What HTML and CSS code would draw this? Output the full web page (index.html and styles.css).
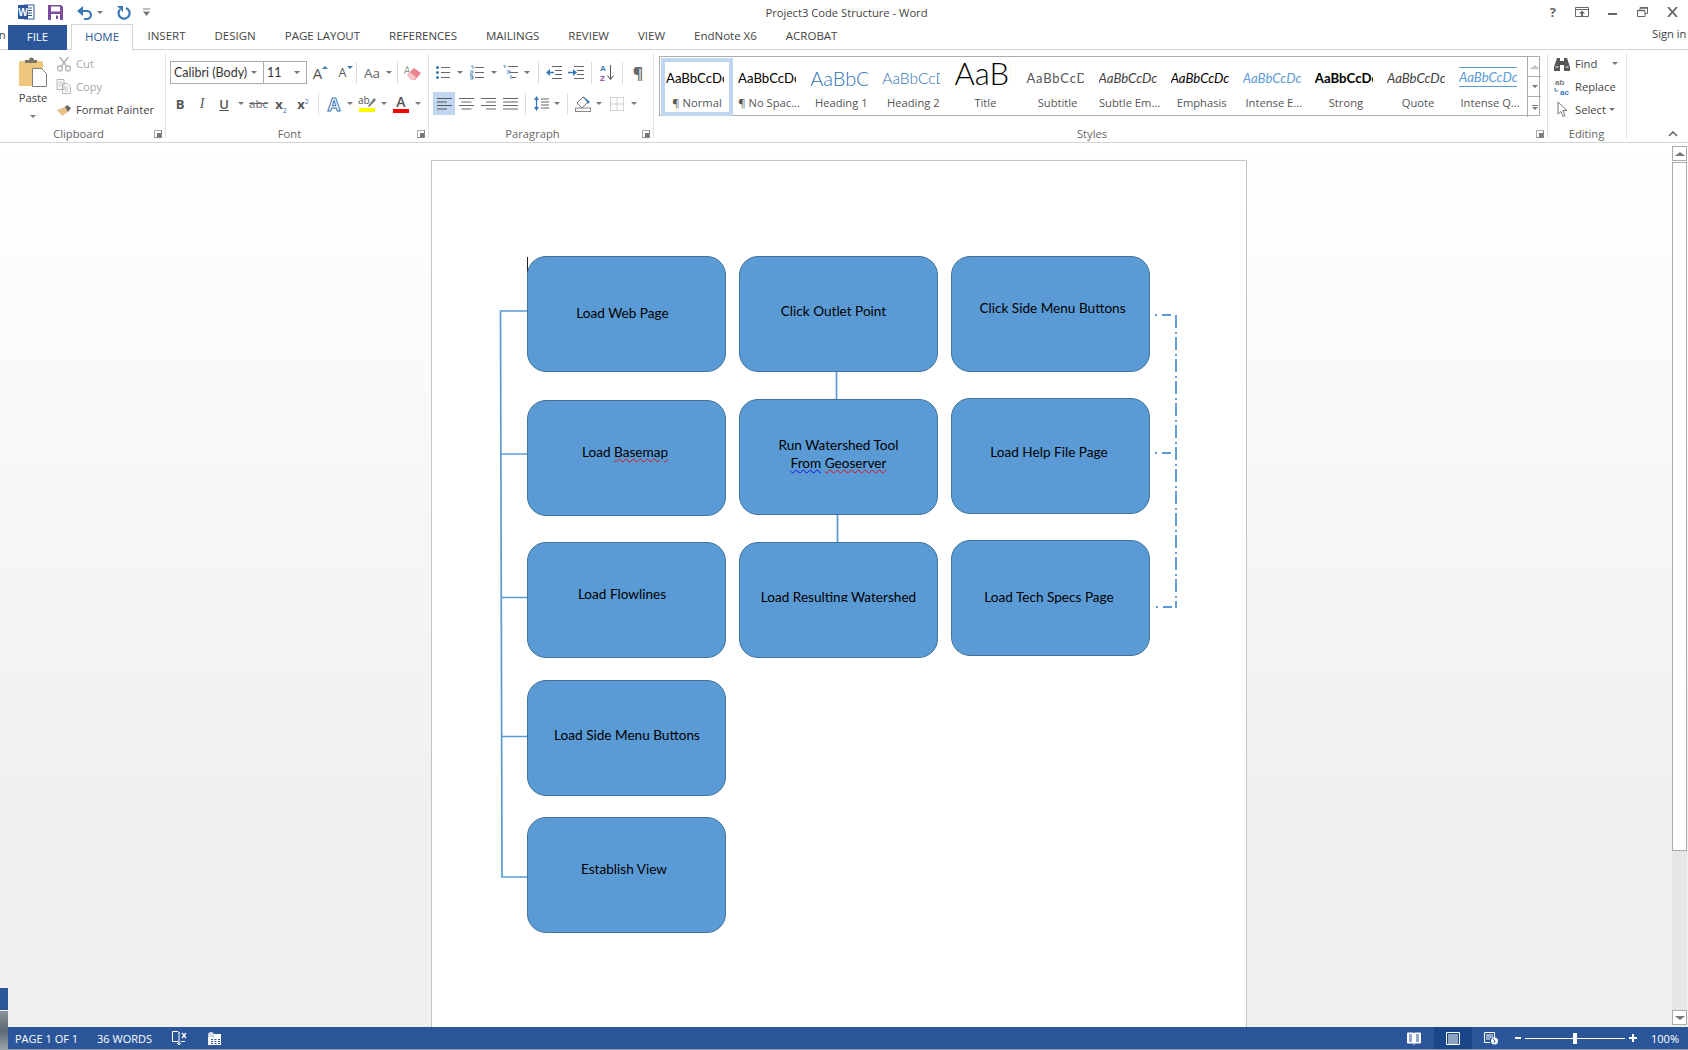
FILE: index.html

```html
<!DOCTYPE html>
<html lang="en">
<head>
  <meta charset="UTF-8">
  <title>Project3 Code Structure - Word</title>
  <link rel="stylesheet" href="styles.css">
</head>
<body>
  <!-- title bar -->
  <div class="titlebar">
    <div class="qat">
      <svg class="ic-word" width="17" height="16" viewBox="0 0 17 16"><rect x="6" y="1" width="10" height="14" fill="#fff" stroke="#2b579a"/><path d="M9 4h5M9 6.500h5M9 9h5M9 11.500h5" stroke="#2b579a"/><rect y="1" width="10" height="14" fill="#2b579a"/><text x="5" y="12" class="svg-w">W</text></svg>
      <svg class="ic-save" width="15" height="15" viewBox="0 0 15 15"><path d="M0 0h13l2 2v13H0z" fill="#7b4b9e"/><rect x="3" y="1.500" width="9" height="5" fill="#fff"/><rect x="3" y="9" width="9" height="6" fill="#fff"/><rect x="8" y="10.500" width="2" height="3.500" fill="#7b4b9e"/></svg>
      <svg class="ic-undo" width="16" height="15" viewBox="0 0 16 15"><path d="M3 6h7a4 4 0 0 1 0 8H7" fill="none" stroke="#3a77b6" stroke-width="2.200"/><path d="M6 1v10L0 6z" fill="#3a77b6"/></svg>
      <span class="caret qat-caret"></span>
      <svg class="ic-redo" width="14" height="15" viewBox="0 0 14 15"><path d="M9 3a5.500 5.500 0 1 1-6 1.500" fill="none" stroke="#3a77b6" stroke-width="2.200"/><path d="M0 1h6v6z" fill="#3a77b6"/></svg>
      <svg class="ic-custom" width="7" height="8" viewBox="0 0 7 8"><path d="M0 1h7" stroke="#777"/><path d="M0 3.500h7L3.500 8z" fill="#777"/></svg>
    </div>
    <div class="doc-title">Project3 Code Structure - Word</div>
    <div class="win-btns">
      <span class="help-q">?</span>
      <svg width="14" height="10" viewBox="0 0 14 10"><path d="M.5.500h13v9H.5zM.5 2.500h13" fill="none" stroke="#666"/><path d="M7 3.500 10 6.500H8V9H6V6.500H4z" fill="#666"/></svg>
      <svg width="10" height="10" viewBox="0 0 10 10"><rect y="6" width="9" height="2" fill="#666"/></svg>
      <svg width="11" height="10" viewBox="0 0 11 10"><path d="M3 2.500V.500h7.500v6H8" fill="none" stroke="#666"/><path d="M.5 3.500h7.500v6H.5z" fill="none" stroke="#666"/><path d="M.5 3.500h7.500M3 1h7.500" stroke="#666" stroke-width="1.500"/></svg>
      <svg width="11" height="10" viewBox="0 0 11 10"><path d="M1 0l9 10M10 0 1 10" stroke="#666" stroke-width="1.800"/></svg>
    </div>
  </div>

  <!-- tabs -->
  <div class="tabs">
    <span class="cut-left">in</span>
    <div class="tab tab-file">FILE</div>
    <div class="tab tab-home">HOME</div>
    <div class="tab">INSERT</div>
    <div class="tab">DESIGN</div>
    <div class="tab">PAGE LAYOUT</div>
    <div class="tab">REFERENCES</div>
    <div class="tab">MAILINGS</div>
    <div class="tab">REVIEW</div>
    <div class="tab">VIEW</div>
    <div class="tab tab-mixed">EndNote X6</div>
    <div class="tab">ACROBAT</div>
    <div class="sign-in">Sign in</div>
  </div>

  <!-- ribbon -->
  <div class="ribbon">
    <div class="group g-clip">
      <div class="clip-body">
        <div class="paste">
          <svg width="30" height="31" viewBox="0 0 30 31"><rect x="1" y="4" width="24" height="25" rx="1.500" fill="#eec67e"/><path d="M7 6V3h4a2.500 2.500 0 0 1 5 0h3v3z" fill="#7d7468"/><path d="M14.500 11.500h9l5 5v13h-14z" fill="#fff" stroke="#7d7d7d"/></svg>
          <span class="paste-label">Paste</span>
          <span class="caret"></span>
        </div>
        <div class="small-col">
          <div class="small-row muted">
            <svg width="15" height="16" viewBox="0 0 15 16"><path d="M3 1l7 9M12 1 5 10" stroke="#b5b5b5" stroke-width="1.500"/><circle cx="3.500" cy="12.500" r="2.500" fill="none" stroke="#b5b5b5" stroke-width="1.300"/><circle cx="11.500" cy="12.500" r="2.500" fill="none" stroke="#b5b5b5" stroke-width="1.300"/></svg>
            <span>Cut</span>
          </div>
          <div class="small-row muted">
            <svg width="15" height="15" viewBox="0 0 15 15"><path d="M.5.500h7v10h-7zM6 4.500h5l3 3v7H6z" fill="#fff" stroke="#b5b5b5"/><path d="M2 3h4M2 5h3M2 7h3M8 8h4M8 10h4M8 12h4" stroke="#c4c4c4"/></svg>
            <span>Copy</span>
          </div>
          <div class="small-row">
            <svg width="16" height="15" viewBox="0 0 16 15"><path d="M8 6l3-3 4 3-3 4z" fill="#666"/><path d="M9 5 1 8l5 6 6-4z" fill="#e8c187"/></svg>
            <span>Format Painter</span>
          </div>
        </div>
      </div>
      <div class="group-label">Clipboard</div>
      <span class="launcher"></span>
    </div>

    <div class="group g-font">
      <div class="rows">
        <div class="row row-font1">
          <div class="fbox fbox-name"><span>Calibri (Body)</span><span class="caret"></span></div>
          <div class="fbox fbox-size"><span>11</span><span class="caret"></span></div>
          <div class="b b-grow"><span class="big-a">A</span><span class="up-tri"></span></div>
          <div class="b b-shrink"><span class="small-a">A</span><span class="down-tri"></span></div>
          <span class="sep s-font1"></span>
          <div class="b b-case"><span class="aa">Aa</span></div>
          <span class="caret c12"></span>
          <span class="sep s-font2"></span>
          <div class="b b-clear">
            <svg width="20" height="18" viewBox="0 0 20 18"><text x="1" y="10" class="svg-clear">A</text><path d="M4 11l7-7 7 5-6 7H8z" fill="#e9828c"/><path d="M4 11l3-3 6 5-2 3H8z" fill="#f6c3c8"/></svg>
          </div>
        </div>
        <div class="row row-font2">
          <div class="b fmt fmt-b">B</div>
          <div class="b fmt fmt-i">I</div>
          <div class="b fmt fmt-u">U</div>
          <span class="caret c12"></span>
          <div class="b b23 fmt-abc">abc</div>
          <div class="b fmt-sub"><span>x<sub>2</sub></span></div>
          <div class="b fmt-sup"><span>x<sup>2</sup></span></div>
          <span class="sep s-font3"></span>
          <div class="b">
            <svg width="18" height="18" viewBox="0 0 18 18"><text x="9" y="16" text-anchor="middle" class="svg-effect">A</text></svg>
          </div>
          <span class="caret c10"></span>
          <div class="b b24 stack">
            <svg width="18" height="13" viewBox="0 0 18 13"><text x="0" y="9" class="svg-ab">ab</text><path d="M10 11l6-8 2 2-7 7z" fill="#777"/></svg>
            <span class="swatch sw-yellow"></span>
          </div>
          <span class="caret c10"></span>
          <div class="b b24 stack">
            <span class="color-a">A</span>
            <span class="swatch sw-red"></span>
          </div>
          <span class="caret c10"></span>
        </div>
      </div>
      <div class="group-label">Font</div>
      <span class="launcher"></span>
    </div>

    <div class="group g-para">
      <div class="rows">
        <div class="row row-para1">
          <div class="b">
            <svg width="14" height="15" viewBox="0 0 14 15"><path d="M5 2.500h9M5 7.500h9M5 12.500h9" stroke="#666"/><circle cx="1.500" cy="2.500" r="1.500" fill="#3a77b6"/><circle cx="1.500" cy="7.500" r="1.500" fill="#3a77b6"/><circle cx="1.500" cy="12.500" r="1.500" fill="#3a77b6"/></svg>
          </div>
          <span class="caret c12"></span>
          <div class="b">
            <svg width="14" height="15" viewBox="0 0 14 15"><path d="M5 2.500h9M5 7.500h9M5 12.500h9" stroke="#666"/><path d="M1 1h2v3M0 6h3v2H0v2h3M0 11h3v3H0M1 12.500h2" fill="none" stroke="#3a77b6" stroke-width=".8"/></svg>
          </div>
          <span class="caret c12"></span>
          <div class="b">
            <svg width="16" height="15" viewBox="0 0 16 15"><path d="M5 1.500h10M7 7.500h8M9 12.500h4" stroke="#666"/><path d="M0 0h2v3M4 6h3v2H4M8 10v4" fill="none" stroke="#3a77b6" stroke-width=".9"/></svg>
          </div>
          <span class="caret c10"></span>
          <span class="sep s-p1"></span>
          <div class="b">
            <svg width="16" height="13" viewBox="0 0 16 13"><path d="M6 .500h10M6 12.500h10M9 4.500h7M9 8.500h7" stroke="#666"/><path d="M8 6.500H2" stroke="#3a77b6" stroke-width="1.500"/><path d="M4 3v7L0 6.500z" fill="#3a77b6"/></svg>
          </div>
          <div class="b">
            <svg width="16" height="13" viewBox="0 0 16 13"><path d="M6 .500h10M6 12.500h10M9 4.500h7M9 8.500h7" stroke="#666"/><path d="M0 6.500h6" stroke="#3a77b6" stroke-width="1.500"/><path d="M5 3v7l4-3.500z" fill="#3a77b6"/></svg>
          </div>
          <span class="sep s-p2"></span>
          <div class="b">
            <svg width="14" height="19" viewBox="0 0 14 19"><text x="0" y="8" class="svg-az az-a">A</text><text x="0" y="17.500" class="svg-az az-z">Z</text><path d="M10.500 2v14" stroke="#555"/><path d="M7.500 12.500l3 4 3-4" fill="none" stroke="#555"/></svg>
          </div>
          <span class="sep s-p3"></span>
          <div class="b pilcrow">¶</div>
        </div>
        <div class="row row-para2">
          <div class="b b-on">
            <svg width="15" height="12" viewBox="0 0 15 12"><path d="M0 .500h15M0 4h10M0 7.500h15M0 11h10" stroke="#555"/></svg>
          </div>
          <div class="b">
            <svg width="15" height="12" viewBox="0 0 15 12"><path d="M0 .500h15M2.500 4h10M0 7.500h15M2.500 11h10" stroke="#666"/></svg>
          </div>
          <div class="b">
            <svg width="15" height="12" viewBox="0 0 15 12"><path d="M0 .500h15M5 4h10M0 7.500h15M5 11h10" stroke="#666"/></svg>
          </div>
          <div class="b">
            <svg width="15" height="12" viewBox="0 0 15 12"><path d="M0 .500h15M0 4h15M0 7.500h15M0 11h15" stroke="#666"/></svg>
          </div>
          <span class="sep s-p4"></span>
          <div class="b">
            <svg width="15" height="15" viewBox="0 0 15 15"><path d="M7 3h8M7 6h8M7 9h8M7 12h8" stroke="#666"/><path d="M2.500 2v11" stroke="#3a77b6" stroke-width="1.300"/><path d="M0 4l2.500-4L5 4zM0 11l2.500 4L5 11z" fill="#3a77b6"/></svg>
          </div>
          <span class="caret c10"></span>
          <span class="sep s-p5"></span>
          <div class="b">
            <svg width="17" height="17" viewBox="0 0 17 17"><path d="M2 8 8 2l5 5-6 6z" fill="#fff" stroke="#777"/><path d="M8 1l7 6-2 2z" fill="#3a77b6"/><rect x=".5" y="13" width="15" height="3.500" fill="#fff" stroke="#888"/></svg>
          </div>
          <span class="caret c10"></span>
          <div class="b b-borders">
            <svg width="14" height="14" viewBox="0 0 14 14"><path d="M.5.500h13v13H.5zM7 .5v13M.5 7h13" fill="none" stroke="#aaa" stroke-dasharray="1 1"/></svg>
          </div>
          <span class="caret c12"></span>
        </div>
      </div>
      <div class="group-label">Paragraph</div>
      <span class="launcher"></span>
    </div>

    <div class="group g-styles">
      <div class="gallery">
        <div class="style-item style-on"><div class="sample">AaBbCcDc</div><div class="style-name">¶ Normal</div></div>
        <div class="style-item"><div class="sample">AaBbCcDc</div><div class="style-name">¶ No Spac...</div></div>
        <div class="style-item"><div class="sample s-h1">AaBbCc</div><div class="style-name">Heading 1</div></div>
        <div class="style-item"><div class="sample s-h2">AaBbCcD</div><div class="style-name">Heading 2</div></div>
        <div class="style-item"><div class="sample s-title">AaBb</div><div class="style-name">Title</div></div>
        <div class="style-item"><div class="sample s-subtitle">AaBbCcD</div><div class="style-name">Subtitle</div></div>
        <div class="style-item"><div class="sample s-subtle">AaBbCcDc</div><div class="style-name">Subtle Em...</div></div>
        <div class="style-item"><div class="sample s-emph">AaBbCcDc</div><div class="style-name">Emphasis</div></div>
        <div class="style-item"><div class="sample s-intense">AaBbCcDc</div><div class="style-name">Intense E...</div></div>
        <div class="style-item"><div class="sample s-strong">AaBbCcDc</div><div class="style-name">Strong</div></div>
        <div class="style-item"><div class="sample s-subtle">AaBbCcDc</div><div class="style-name">Quote</div></div>
        <div class="style-item"><div class="sample s-intense s-iq">AaBbCcDc</div><div class="style-name">Intense Q...</div></div>
        <div class="gallery-scroll">
          <div class="gs-btn"><span class="tri-up off"></span></div>
          <div class="gs-btn"><span class="caret"></span></div>
          <div class="gs-btn gs-more"><span class="bar"></span><span class="caret"></span></div>
        </div>
      </div>
      <div class="group-label">Styles</div>
      <span class="launcher"></span>
    </div>

    <div class="group g-edit">
      <div class="small-col edit-col">
        <div class="small-row">
          <svg width="16" height="14" viewBox="0 0 16 14"><path d="M3 1h3v3h4V1h3l3 9v4h-6V8H6v6H0v-4z" fill="#555"/><path d="M1.500 10h3M11.500 10h3" stroke="#fff"/></svg>
          <span>Find</span><span class="caret find-caret"></span>
        </div>
        <div class="small-row">
          <svg width="16" height="18" viewBox="0 0 16 18"><text x="1" y="7" class="svg-rep rep-ab">ab</text><text x="6" y="16.500" class="svg-rep rep-ac">ac</text><path d="M1 10v3h3" fill="none" stroke="#3a77b6"/></svg>
          <span>Replace</span>
        </div>
        <div class="small-row">
          <svg width="16" height="17" viewBox="0 0 16 17"><path d="M4 1v12l3-2.500 2 5 2-1-2-5h4z" fill="#fff" stroke="#777"/></svg>
          <span>Select</span><span class="caret sel-caret"></span>
        </div>
      </div>
      <div class="group-label">Editing</div>
    </div>
    <svg class="collapse" width="10" height="6" viewBox="0 0 10 6"><path d="M1 5l4-4 4 4" fill="none" stroke="#666" stroke-width="1.600"/></svg>
  </div>

  <!-- document -->
  <div class="workspace">
    <div class="page">
      <svg class="links" width="814" height="800" viewBox="432 161 814 800">
        <path class="link" d="M527 311H500.500L502 877H527M501 454H527M501.500 597.500H527M502 736.500H527M836.500 372V399M837.500 515V542"/>
        <path class="link link-dash" d="M1176 315V608"/>
        <path class="link link-tick" d="M1155 315H1176M1155 453H1176M1156 607H1176"/>
      </svg>
      <span class="cursor"></span>
      <div class="node n-web">Load Web Page</div>
      <div class="node n-outlet">Click Outlet Point</div>
      <div class="node n-side">Click Side Menu Buttons</div>
      <div class="node n-base">Load <span class="typo">Basemap</span></div>
      <div class="node n-run">Run Watershed Tool<br><span class="gram">From</span> <span class="typo">Geoserver</span></div>
      <div class="node n-help">Load Help File Page</div>
      <div class="node n-flow">Load Flowlines</div>
      <div class="node n-result"><span class="cut-line">Load Resulting Watershed</span></div>
      <div class="node n-tech">Load Tech Specs Page</div>
      <div class="node n-menu">Load Side Menu Buttons</div>
      <div class="node n-view">Establish View</div>
    </div>
    <div class="vscroll">
      <div class="vs-btn"><span class="tri-up"></span></div>
      <div class="vs-thumb"></div>
      <div class="vs-track"></div>
      <div class="vs-btn"><span class="tri-down"></span></div>
    </div>
    <div class="edge-blue"></div>
  </div>

  <!-- status bar -->
  <div class="statusbar">
    <span class="st-text st-page">PAGE 1 OF 1</span>
    <span class="st-text st-words">36 WORDS</span>
    <svg class="st-book" width="15" height="14" viewBox="0 0 15 14"><path d="M7 1.500 6 .5H.5v10H6l1 1.500V1.500zM7 1.500h1" fill="none" stroke="#fff"/><path d="M10 2l4 5M14 2l-4 5" stroke="#fff" stroke-width="1.300"/><path d="M7 12v2M5 12l2 2 2-2M9 10.500h4" fill="none" stroke="#fff"/></svg>
    <svg class="st-macro" width="13" height="13" viewBox="0 0 13 13"><circle cx="3" cy="3" r="3" fill="#d6dfee"/><path d="M0 6h13V2H6v3H0zM0 6h13v7H0z" fill="#fff"/><path d="M3 7.500h2M6.500 7.500h2M10 7.500h2M3 9.500h2M6.500 9.500h2M10 9.500h2M3 11.500h2M6.500 11.500h2M10 11.500h2" stroke="#2b579a"/></svg>
    <div class="st-right">
      <svg class="st-read" width="14" height="13" viewBox="0 0 14 13"><path d="M.5 1h6v10h-6zM7.500 1h6v10h-6z" fill="#fff" stroke="#fff"/><path d="M2 3h3M2 5h3M2 7h3M2 9h3M9 3h3M9 5h3M9 7h3M9 9h3" stroke="#2b579a"/><path d="M7 11v2" stroke="#fff"/></svg>
      <div class="st-view-on">
        <svg width="14" height="13" viewBox="0 0 14 13"><path d="M.5.500h13v12H.5z" fill="none" stroke="#fff"/><path d="M2 3h10M2 5h10M2 7h10M2 9h10M2 11h10" stroke="#fff"/></svg>
      </div>
      <svg class="st-web" width="14" height="13" viewBox="0 0 14 13"><path d="M.5.500h10V6M.5.500v10H6" fill="none" stroke="#fff"/><path d="M2 3h7M2 5h7M2 7h4" stroke="#fff"/><circle cx="10.500" cy="9" r="3.500" fill="#fff"/><path d="M9 7l2 2-1 2" fill="none" stroke="#2b579a"/></svg>
      <div class="zoomer">
        <span class="z-minus"></span>
        <div class="z-track"><span class="z-thumb"></span></div>
        <span class="z-plus"></span>
      </div>
      <span class="st-text st-zoom">100%</span>
    </div>
  </div>
  <div class="edge-grey"></div>
</body>
</html>
```

FILE: styles.css

```css
* {
  box-sizing: border-box;
}

html, body {
  margin: 0;
  height: 100%;
}

body {
  position: relative;
  display: flex;
  flex-direction: column;
  width: 1688px;
  height: 1050px;
  overflow: hidden;
  background: #fff;
  font-family: "Open Sans", sans-serif;
  font-size: 11.2px;
  color: #444;
}

svg {
  display: block;
  flex: none;
}

.caret {
  display: inline-block;
  flex: none;
  width: 0;
  height: 0;
  border-left: 3px solid transparent;
  border-right: 3px solid transparent;
  border-top: 3px solid #777;
}

.c10, .c12 {
  margin: 0 2px;
}

.c12 {
  margin: 0 3px;
}

/* title bar */
.titlebar {
  flex: none;
  display: grid;
  grid-template-columns: 1fr auto 1fr;
  align-items: center;
  height: 24px;
}

.qat {
  display: flex;
  align-items: center;
  padding-left: 18px;
}

.ic-save {
  margin-left: 13px;
}

.ic-undo {
  margin-left: 14px;
}

.qat-caret {
  margin-left: 4px;
}

.ic-redo {
  margin-left: 14px;
}

.ic-custom {
  margin-left: 12px;
}

.doc-title {
  padding-left: 5px;
  color: #444;
}

.win-btns {
  display: flex;
  align-items: center;
  justify-content: flex-end;
  gap: 19px;
  padding-right: 10px;
}

.help-q {
  font-weight: 700;
  font-size: 13px;
  line-height: 14px;
  color: #666;
}

/* tabs */
.tabs {
  flex: none;
  position: relative;
  display: flex;
  height: 26px;
  padding-left: 8px;
  border-bottom: 1px solid #d4d4d4;
}

.tab {
  padding: 0 14.5px;
  font-size: 11.500px;
  line-height: 23px;
  color: #444;
  white-space: nowrap;
}

.tab-file {
  width: 59px;
  margin-top: 1px;
  margin-right: 4px;
  padding: 0;
  height: 25px;
  text-align: center;
  background: #2b579a;
  color: #fff;
}

.tab-home {
  width: 62px;
  height: 26px;
  margin-top: 0;
  padding: 0;
  text-align: center;
  color: #2b579a;
  background: #fff;
  border: 1px solid #d4d4d4;
  border-bottom: 0;
}

.cut-left {
  position: absolute;
  left: -4px;
  top: 3px;
  line-height: 16px;
}

.sign-in {
  position: absolute;
  left: 1652px;
  top: 2px;
  color: #444;
  white-space: nowrap;
}

/* ribbon */
.ribbon {
  flex: none;
  position: relative;
  display: flex;
  height: 93px;
  border-bottom: 1px solid #d4d4d4;
}

.group {
  position: relative;
  display: flex;
  flex-direction: column;
  height: 92px;
}

.group::after {
  content: "";
  position: absolute;
  right: 0;
  top: 4px;
  bottom: 4px;
  width: 1px;
  background: #e1e1e1;
}

.g-clip {
  width: 166px;
}

.g-font {
  width: 263px;
}

.g-para {
  width: 225px;
}

.g-styles {
  width: 894px;
}

.g-edit {
  width: 79px;
}

.group-label {
  margin-top: auto;
  height: 16px;
  line-height: 16px;
  text-align: center;
  color: #666;
}

.g-clip .group-label {
  padding-right: 9px;
}

.g-font .group-label {
  padding-right: 16px;
}

.g-para .group-label,
.g-styles .group-label {
  padding-right: 18px;
}

.g-edit .group-label {
  padding-right: 2px;
}

.launcher {
  position: absolute;
  right: 4px;
  bottom: 4px;
  width: 8px;
  height: 8px;
  border: 1px solid #888;
  border-top-color: #aaa;
  border-left-color: #aaa;
}

.launcher::after {
  content: "";
  position: absolute;
  right: 0;
  bottom: 0;
  width: 4px;
  height: 4px;
  background: #777;
}

/* clipboard */
.clip-body {
  display: flex;
}

.paste {
  display: flex;
  flex-direction: column;
  align-items: center;
  width: 46px;
  margin-left: 10px;
  padding-top: 7px;
}

.paste-label {
  line-height: 20px;
}

.paste .caret {
  margin-top: 7px;
}

.small-col {
  display: flex;
  flex-direction: column;
  padding-top: 2px;
}

.small-row {
  display: flex;
  align-items: center;
  gap: 4px;
  height: 23px;
  white-space: nowrap;
}

.small-row svg {
  width: 16px;
}

.muted {
  color: #a8a8a8;
}

/* font + paragraph rows */
.rows {
  display: flex;
  flex-direction: column;
  gap: 8px;
  padding-top: 11px;
}

.row {
  display: flex;
  align-items: center;
  height: 23px;
}

.row-font1 {
  padding-left: 4px;
}

.row-font2 {
  padding-left: 3px;
}

.row-para1 {
  padding-left: 3px;
}

.row-para2 {
  padding-left: 4px;
}

.fbox {
  display: flex;
  align-items: center;
  justify-content: space-between;
  height: 23px;
  padding: 0 6px 0 3px;
  border: 1px solid #ababab;
  font-family: "Lato", sans-serif;
  font-size: 12.500px;
  color: #333;
  white-space: nowrap;
}

.fbox-name {
  width: 94px;
}

.fbox-size {
  width: 43px;
  margin-left: 0;
  border-left-width: 0;
}

.b {
  position: relative;
  display: flex;
  flex: none;
  align-items: center;
  justify-content: center;
  width: 22px;
  height: 23px;
}

.b23 {
  width: 23px;
}

.b24 {
  width: 24px;
}

.b-on {
  background: #c1d6f1;
}

.b-grow {
  margin-left: 1px;
}

.b-shrink {
  margin-left: 3px;
}

.big-a {
  margin-right: 3px;
  font-size: 15px;
  color: #555;
}

.small-a {
  margin-right: 3px;
  font-size: 12.500px;
  color: #555;
}

.up-tri, .down-tri {
  position: absolute;
  right: 2px;
  top: 5px;
  width: 0;
  height: 0;
  border-left: 3px solid transparent;
  border-right: 3px solid transparent;
}

.up-tri {
  border-bottom: 3px solid #3a77b6;
}

.down-tri {
  border-top: 3px solid #3a77b6;
}

.aa {
  font-size: 13.500px;
  color: #666;
}

.b-case {
  margin-left: -1px;
}

.sep {
  flex: none;
  width: 1px;
  height: 22px;
  background: #dcdcdc;
}

.s-font1 {
  margin: 0 5px 0 1px;
}

.s-font2 {
  margin: 0 4px 0 2px;
}

.s-font3 {
  margin: 0 4px;
}

.s-p1 {
  margin: 0 4px 0 6px;
}

.s-p2, .s-p3, .s-p4 {
  margin: 0 4px;
}

.s-p5 {
  margin: 0 4px 0 5px;
}

.b-borders {
  margin-left: 2px;
}

.fmt {
  font-size: 13px;
  color: #555;
}

.fmt-b {
  font-weight: 700;
}

.fmt-i {
  font-style: italic;
  font-family: "Liberation Serif", serif;
  font-size: 14px;
}

.fmt-u {
  font-weight: 600;
  text-decoration: underline;
}

.fmt-abc {
  font-size: 11.500px;
  color: #666;
  text-decoration: line-through;
}

.fmt-sub, .fmt-sup {
  font-size: 13px;
  font-weight: 700;
  line-height: 16px;
  color: #555;
}

.fmt-sub sub, .fmt-sup sup {
  font-size: 7px;
  font-weight: 400;
  line-height: 0;
  color: #3a77b6;
}

.stack {
  flex-direction: column;
}

.swatch {
  width: 16px;
  height: 4px;
}

.sw-yellow {
  background: #ffff00;
}

.sw-red {
  background: #ff0000;
}

.color-a {
  font-size: 14px;
  font-weight: 600;
  line-height: 15px;
  color: #555;
}

.pilcrow {
  font-size: 16px;
  font-weight: 700;
  color: #666;
}

.svg-w {
  font: 700 10px "Liberation Sans", sans-serif;
  fill: #fff;
  text-anchor: middle;
}

.svg-clear {
  font: 10px "Open Sans", sans-serif;
  fill: #999;
}

.svg-effect {
  font: 700 18px "Open Sans", sans-serif;
  fill: #fff;
  stroke: #3a77b6;
  stroke-width: 1;
}

.svg-ab {
  font: 10px "Open Sans", sans-serif;
  fill: #555;
}

.svg-az {
  font: 700 8px "Liberation Sans", sans-serif;
}

.az-a {
  fill: #3a77b6;
}

.az-z {
  fill: #7b4b9e;
}

.svg-rep {
  font: 700 8px "Liberation Sans", sans-serif;
}

.rep-ab {
  fill: #777;
}

.rep-ac {
  fill: #3a77b6;
}

/* style gallery */
.gallery {
  display: flex;
  width: 881px;
  height: 60px;
  margin: 6px 0 0 5px;
  padding: 1px;
  border: 1px solid #ababab;
}

.style-item {
  display: flex;
  flex: none;
  flex-direction: column;
  align-items: center;
  width: 72.100px;
  height: 58px;
  border: 4px solid transparent;
}

.style-on {
  border-color: #c1d6f1;
}

.sample {
  display: flex;
  align-items: center;
  align-self: flex-start;
  flex: none;
  width: 58px;
  height: 31px;
  margin-left: 1px;
  overflow: hidden;
  font-family: "Lato", sans-serif;
  font-size: 13.200px;
  color: #000;
  white-space: nowrap;
}

.style-name {
  line-height: 20px;
  color: #555;
  white-space: nowrap;
}

.s-h1 {
  font-size: 20px;
  font-weight: 300;
  color: #2e74b5;
}

.s-h2 {
  font-size: 15.500px;
  font-weight: 300;
  color: #2e74b5;
}

.s-title {
  width: 57px;
  height: 27px;
  margin-bottom: 4px;
  font-size: 31px;
  font-weight: 300;
  align-items: flex-end;
  line-height: 31px;
}

.s-subtitle {
  font-size: 13px;
  letter-spacing: 0.8px;
  color: #555;
}

.s-subtle {
  font-style: italic;
  color: #404040;
}

.s-emph {
  font-style: italic;
}

.s-intense {
  font-style: italic;
  color: #5b9bd5;
}

.s-strong {
  font-weight: 700;
}

.s-iq {
  height: 20px;
  margin: 5px 0 6px 1px;
  border-top: 1px solid #5b9bd5;
  border-bottom: 1px solid #5b9bd5;
}

.gallery-scroll {
  display: flex;
  flex-direction: column;
  flex: none;
  width: 14px;
  height: 60px;
  margin: -1px 0 0 1px;
  border-left: 1px solid #ababab;
}

.gs-btn {
  display: flex;
  flex-direction: column;
  align-items: center;
  justify-content: center;
  gap: 1px;
  height: 20px;
  border-bottom: 1px solid #ababab;
}

.gs-more {
  border-bottom: 0;
}

.bar {
  width: 6px;
  height: 1px;
  background: #777;
}

.tri-up {
  width: 0;
  height: 0;
  border-left: 5px solid transparent;
  border-right: 5px solid transparent;
  border-bottom: 4px solid #777;
}

.tri-up.off {
  border-bottom-color: #c6c6c6;
}

.tri-down {
  width: 0;
  height: 0;
  border-left: 5px solid transparent;
  border-right: 5px solid transparent;
  border-top: 4px solid #777;
}

.edit-col {
  margin-left: 6px;
}

.edit-col .small-row {
  gap: 5px;
}

.find-caret {
  margin-left: 10px;
}

.sel-caret {
  margin-left: -2px;
}

.collapse {
  position: absolute;
  left: 1668px;
  top: 81px;
}

/* document area */
.workspace {
  position: relative;
  flex: 1;
  display: flex;
  min-height: 0;
  overflow: hidden;
  background: linear-gradient(#fff 0, #f0f0f0 75%);
}

.page {
  position: relative;
  flex: none;
  width: 816px;
  height: 1056px;
  margin: 17px 425px 0 431px;
  background: #fff;
  border: 1px solid #c6c6c6;
}

.links {
  position: absolute;
  left: 0;
  top: 0;
}

.link {
  fill: none;
  stroke: #5b9bd5;
  stroke-width: 1.700;
}

.link-dash {
  stroke-width: 1.900;
  stroke-dasharray: 13 4 2 3;
}

.link-tick {
  stroke-width: 1.900;
  stroke-dasharray: 2 5 9 99;
}

.cursor {
  position: absolute;
  left: 95px;
  top: 96px;
  width: 1px;
  height: 16px;
  background: #222;
}

.node {
  position: absolute;
  width: 199px;
  height: 116px;
  text-align: center;
  font-family: "Lato", sans-serif;
  font-size: 13.600px;
  line-height: 18px;
  color: #000;
  background: #5b9bd5;
  border: 1px solid #41719c;
  border-radius: 19px;
}

.n-web {
  left: 95px;
  top: 95px;
  padding: 47px 8px 0 0;
}

.n-outlet {
  left: 307px;
  top: 95px;
  padding: 45px 10px 0 0;
}

.n-side {
  left: 519px;
  top: 95px;
  padding: 42px 0 0 4px;
}

.n-base {
  left: 95px;
  top: 239px;
  padding: 42px 3px 0 0;
}

.n-run {
  left: 307px;
  top: 238px;
  padding-top: 36px;
}

.n-help {
  left: 519px;
  top: 237px;
  padding: 44px 3px 0 0;
}

.n-flow {
  left: 95px;
  top: 381px;
  padding: 42px 9px 0 0;
}

.n-result {
  left: 307px;
  top: 381px;
  padding-top: 45px;
}

.n-tech {
  left: 519px;
  top: 379px;
  padding: 47px 3px 0 0;
}

.n-menu {
  left: 95px;
  top: 519px;
  padding: 45px 0 0 1px;
}

.n-view {
  left: 95px;
  top: 656px;
  padding: 42px 5px 0 0;
}

.cut-line {
  display: block;
  height: 14px;
  overflow: hidden;
}

.typo {
  text-decoration: underline wavy #e01010 1px;
}

.gram {
  text-decoration: underline wavy #1010e0 1px;
}

.vscroll {
  position: absolute;
  left: 1672px;
  top: 3px;
  display: flex;
  flex-direction: column;
  width: 15px;
  height: 879px;
}

.vs-btn {
  display: flex;
  flex: none;
  align-items: center;
  justify-content: center;
  height: 15px;
  background: #fff;
  border: 1px solid #ababab;
}

.vs-thumb {
  flex: none;
  height: 689px;
  margin-top: 1px;
  background: #fff;
  border: 1px solid #ababab;
}

.vs-track {
  flex: 1;
  background: #e6e6e6;
}

.edge-blue {
  position: absolute;
  left: 0;
  top: 845px;
  width: 8px;
  height: 22px;
  background: #2b579a;
}

.edge-grey {
  position: absolute;
  left: 0;
  top: 1011px;
  width: 8px;
  height: 39px;
  background: linear-gradient(#8b949b, #5d6a74 50%, #9aa3a9);
}

/* status bar */
.statusbar {
  flex: none;
  display: flex;
  align-items: center;
  height: 23px;
  margin-left: 8px;
  background: #2b579a;
  border-bottom: 1px solid #8d98a5;
}

.st-text {
  color: #fff;
  font-size: 11px;
  white-space: nowrap;
}

.st-page {
  margin-left: 7px;
}

.st-words {
  margin-left: 19px;
}

.st-book {
  margin-left: 20px;
}

.st-macro {
  margin-left: 21px;
}

.st-right {
  display: flex;
  align-items: center;
  height: 22px;
  margin-left: auto;
}

.st-read {
  margin-right: 13px;
}

.st-view-on {
  display: flex;
  align-items: center;
  justify-content: center;
  width: 38px;
  height: 22px;
  background: #19478a;
}

.st-web {
  margin-left: 12px;
}

.zoomer {
  display: flex;
  align-items: center;
  margin-left: 17px;
}

.z-minus {
  width: 6px;
  height: 2px;
  background: #fff;
}

.z-track {
  position: relative;
  width: 100px;
  height: 1px;
  margin: 0 4px;
  background: #fff;
}

.z-thumb {
  position: absolute;
  left: 48px;
  top: -5px;
  width: 4px;
  height: 11px;
  background: #fff;
}

.z-plus {
  position: relative;
  width: 8px;
  height: 2px;
  background: #fff;
}

.z-plus::after {
  content: "";
  position: absolute;
  left: 3px;
  top: -3px;
  width: 2px;
  height: 8px;
  background: #fff;
}

.st-zoom {
  margin: 0 9px 0 14px;
}
```
